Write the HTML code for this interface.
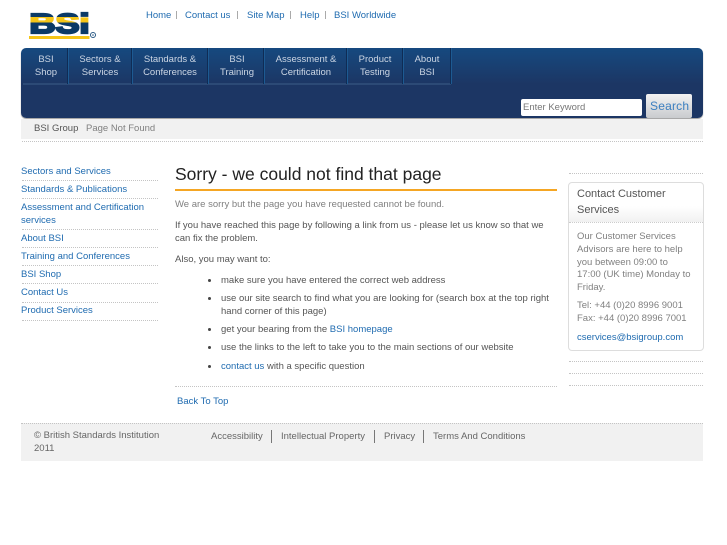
<!DOCTYPE html>
<html><head><meta charset="utf-8"><title>Sorry - we could not find that page</title>
<style>
html,body{margin:0;padding:0;background:#fff;}
body{width:727px;height:545px;position:relative;overflow:hidden;font-family:"Liberation Sans",sans-serif;font-size:9.5px;color:#555;filter:blur(.3px);}
.t{position:absolute;white-space:nowrap;line-height:14px;height:14px;letter-spacing:0;margin-top:1px;}
.x{margin-top:0;}
.c{text-align:center;transform:translateX(-50%);color:#ccd6e4;}
.b{color:#1f6bb0;}
.g{color:#808080;}
.d{position:absolute;height:0;border-top:1px dotted #c4c4c4;}
.s{position:absolute;background:#0f2c55;width:2px;border-right:1px solid #1d5a92;top:48px;height:36px;box-sizing:border-box;}
.dot{position:absolute;width:3px;height:3px;border-radius:50%;background:#444;left:208px;}
.sep{position:absolute;width:1px;background:#777;}
.l{background:#aaa;}
</style></head><body>

<svg style="position:absolute;left:0;top:0" width="110" height="45">
<defs><linearGradient id="lg" x1="0" y1="0" x2="0" y2="45" gradientUnits="userSpaceOnUse">
<stop offset="0" stop-color="#0b3a66"/><stop offset=".38" stop-color="#0b3a66"/><stop offset=".38" stop-color="#f5c518"/><stop offset=".5" stop-color="#f5c518"/><stop offset=".5" stop-color="#0b3a66"/><stop offset="1" stop-color="#0b3a66"/></linearGradient></defs>
<text x="29.500" y="33" font-family="Liberation Sans" font-weight="700" font-size="28" textLength="60" lengthAdjust="spacingAndGlyphs" fill="url(#lg)" stroke="url(#lg)" stroke-width="2.200">BSi</text>
<rect x="29" y="36" width="60.500" height="3" fill="#f5c518"/>
<circle cx="93" cy="35" r="2.500" fill="none" stroke="#2a5a85" stroke-width="1"/>
<circle cx="93" cy="35" r=".8" fill="#2a5a85"/>
</svg>

<div class="t b" style="left:146px;top:8px">Home</div><div class="sep l" style="left:176px;top:11px;height:8px"></div>
<div class="t b" style="left:185px;top:8px">Contact us</div><div class="sep l" style="left:237px;top:11px;height:8px"></div>
<div class="t b" style="left:247px;top:8px">Site Map</div><div class="sep l" style="left:290px;top:11px;height:8px"></div>
<div class="t b" style="left:300px;top:8px">Help</div><div class="sep l" style="left:325px;top:11px;height:8px"></div>
<div class="t b" style="left:334px;top:8px">BSI Worldwide</div>

<div style="position:absolute;left:21px;top:48px;width:682px;height:70px;border-radius:5px;background:linear-gradient(#16497f 0,#1c3664 36px,#1c3664 100%);box-shadow:0 1px 1px #999"></div>
<div style="position:absolute;left:23px;top:83px;width:428px;height:2px;background:#2c4a76"></div>
<div class="s" style="left:67px"></div><div class="s" style="left:131px"></div><div class="s" style="left:207px"></div><div class="s" style="left:263px"></div><div class="s" style="left:346px"></div><div class="s" style="left:402px"></div><div class="s" style="left:450px"></div>

<div class="t c" style="left:46px;top:52px">BSI</div><div class="t c" style="left:46px;top:65px">Shop</div>
<div class="t c" style="left:100px;top:52px">Sectors &amp;</div><div class="t c" style="left:100px;top:65px">Services</div>
<div class="t c" style="left:170px;top:52px">Standards &amp;</div><div class="t c" style="left:170px;top:65px">Conferences</div>
<div class="t c" style="left:237px;top:52px">BSI</div><div class="t c" style="left:237px;top:65px">Training</div>
<div class="t c" style="left:306px;top:52px">Assessment &amp;</div><div class="t c" style="left:306px;top:65px">Certification</div>
<div class="t c" style="left:375px;top:52px">Product</div><div class="t c" style="left:375px;top:65px">Testing</div>
<div class="t c" style="left:427px;top:52px">About</div><div class="t c" style="left:427px;top:65px">BSI</div>

<div style="position:absolute;left:521px;top:99px;width:121px;height:17px;background:#fff;border-radius:2px"></div>
<div class="t g" style="left:523px;top:100px;color:#777">Enter Keyword</div>
<div style="position:absolute;left:646px;top:94px;width:46px;height:24px;border-radius:2px;background:linear-gradient(#f2f2f2,#c9cbce)"></div>
<div class="t x" style="left:650px;top:99px;font-size:12px;color:#3b7fc0;letter-spacing:.2px">Search</div>

<div style="position:absolute;left:21px;top:119px;width:682px;height:20px;background:#f1f1f1"></div>
<div class="t" style="left:34px;top:121px;color:#555">BSI Group</div>
<div class="t g" style="left:86px;top:121px">Page Not Found</div>
<div class="d" style="left:22px;top:141px;width:681px"></div>

<div class="t b" style="left:21px;top:164px">Sectors and Services</div><div class="d" style="left:22px;top:180px;width:136px"></div>
<div class="t b" style="left:21px;top:182px">Standards &amp; Publications</div><div class="d" style="left:22px;top:198px;width:136px"></div>
<div class="t b" style="left:21px;top:200px">Assessment and Certification</div>
<div class="t b" style="left:21px;top:213px">services</div><div class="d" style="left:22px;top:229px;width:136px"></div>
<div class="t b" style="left:21px;top:231px">About BSI</div><div class="d" style="left:22px;top:247px;width:136px"></div>
<div class="t b" style="left:21px;top:249px">Training and Conferences</div><div class="d" style="left:22px;top:265px;width:136px"></div>
<div class="t b" style="left:21px;top:267px">BSI Shop</div><div class="d" style="left:22px;top:283px;width:136px"></div>
<div class="t b" style="left:21px;top:285px">Contact Us</div><div class="d" style="left:22px;top:302px;width:136px"></div>
<div class="t b" style="left:21px;top:303px">Product Services</div><div class="d" style="left:22px;top:320px;width:136px"></div>

<div class="t x" style="left:175px;top:165px;font-size:17.5px;line-height:18px;height:18px;color:#222">Sorry - we could not find that page</div>
<div style="position:absolute;left:175px;top:189px;width:382px;height:2px;background:#f5a623"></div>

<div class="t g" style="left:175px;top:197px">We are sorry but the page you have requested cannot be found.</div>
<div class="t" style="left:175px;top:218px">If you have reached this page by following a link from us - please let us know so that we</div>
<div class="t" style="left:175px;top:231px">can fix the problem.</div>
<div class="t" style="left:175px;top:252px">Also, you may want to:</div>

<div class="dot" style="top:279px"></div><div class="t" style="left:221px;top:273px">make sure you have entered the correct web address</div>
<div class="dot" style="top:297px"></div><div class="t" style="left:221px;top:291px">use our site search to find what you are looking for (search box at the top right</div>
<div class="t" style="left:221px;top:304px">hand corner of this page)</div>
<div class="dot" style="top:328px"></div><div class="t" style="left:221px;top:322px">get your bearing from the <span class="b">BSI homepage</span></div>
<div class="dot" style="top:346px"></div><div class="t" style="left:221px;top:340px">use the links to the left to take you to the main sections of our website</div>
<div class="dot" style="top:365px"></div><div class="t" style="left:221px;top:359px"><span class="b">contact us</span> with a specific question</div>

<div class="d" style="left:175px;top:386px;width:382px"></div>
<div class="t b" style="left:177px;top:394px">Back To Top</div>

<div class="d" style="left:569px;top:173px;width:134px"></div>
<div style="position:absolute;left:568px;top:182px;width:134px;height:167px;border:1px solid #ddd;border-radius:4px;overflow:hidden">
<div style="position:absolute;left:0;top:23px;width:134px;height:16px;background:linear-gradient(#fff,#f1f1f1);border-bottom:1px dotted #ccc"></div>
</div>
<div class="t x" style="left:577px;top:186px;font-size:11px;line-height:16px;height:16px;color:#555">Contact Customer</div>
<div class="t x" style="left:577px;top:202px;font-size:11px;line-height:16px;height:16px;color:#555">Services</div>
<div class="t g" style="left:577px;top:229px">Our Customer Services</div>
<div class="t g" style="left:577px;top:241.500px">Advisors are here to help</div>
<div class="t g" style="left:577px;top:254.500px">you between 09:00 to</div>
<div class="t g" style="left:577px;top:267px">17:00 (UK time) Monday to</div>
<div class="t g" style="left:577px;top:280px">Friday.</div>
<div class="t g" style="left:577px;top:298px">Tel: +44 (0)20 8996 9001</div>
<div class="t g" style="left:577px;top:311px">Fax: +44 (0)20 8996 7001</div>
<div class="t b" style="left:577px;top:330px">cservices@bsigroup.com</div>
<div class="d" style="left:569px;top:361px;width:134px"></div>
<div class="d" style="left:569px;top:373px;width:134px"></div>
<div class="d" style="left:569px;top:385px;width:134px"></div>

<div style="position:absolute;left:21px;top:423px;width:682px;height:38px;background:#f1f1f1"></div>
<div class="d" style="left:21px;top:423px;width:682px"></div>
<div class="t" style="left:34px;top:428px;color:#666">© British Standards Institution</div>
<div class="t" style="left:34px;top:441px;color:#666">2011</div>
<div class="t" style="left:211px;top:429px;color:#666">Accessibility</div><div class="sep" style="left:271px;top:430px;height:13px"></div>
<div class="t" style="left:281px;top:429px;color:#666">Intellectual Property</div><div class="sep" style="left:374px;top:430px;height:13px"></div>
<div class="t" style="left:384px;top:429px;color:#666">Privacy</div><div class="sep" style="left:423px;top:430px;height:13px"></div>
<div class="t" style="left:433px;top:429px;color:#666">Terms And Conditions</div>
</body></html>
